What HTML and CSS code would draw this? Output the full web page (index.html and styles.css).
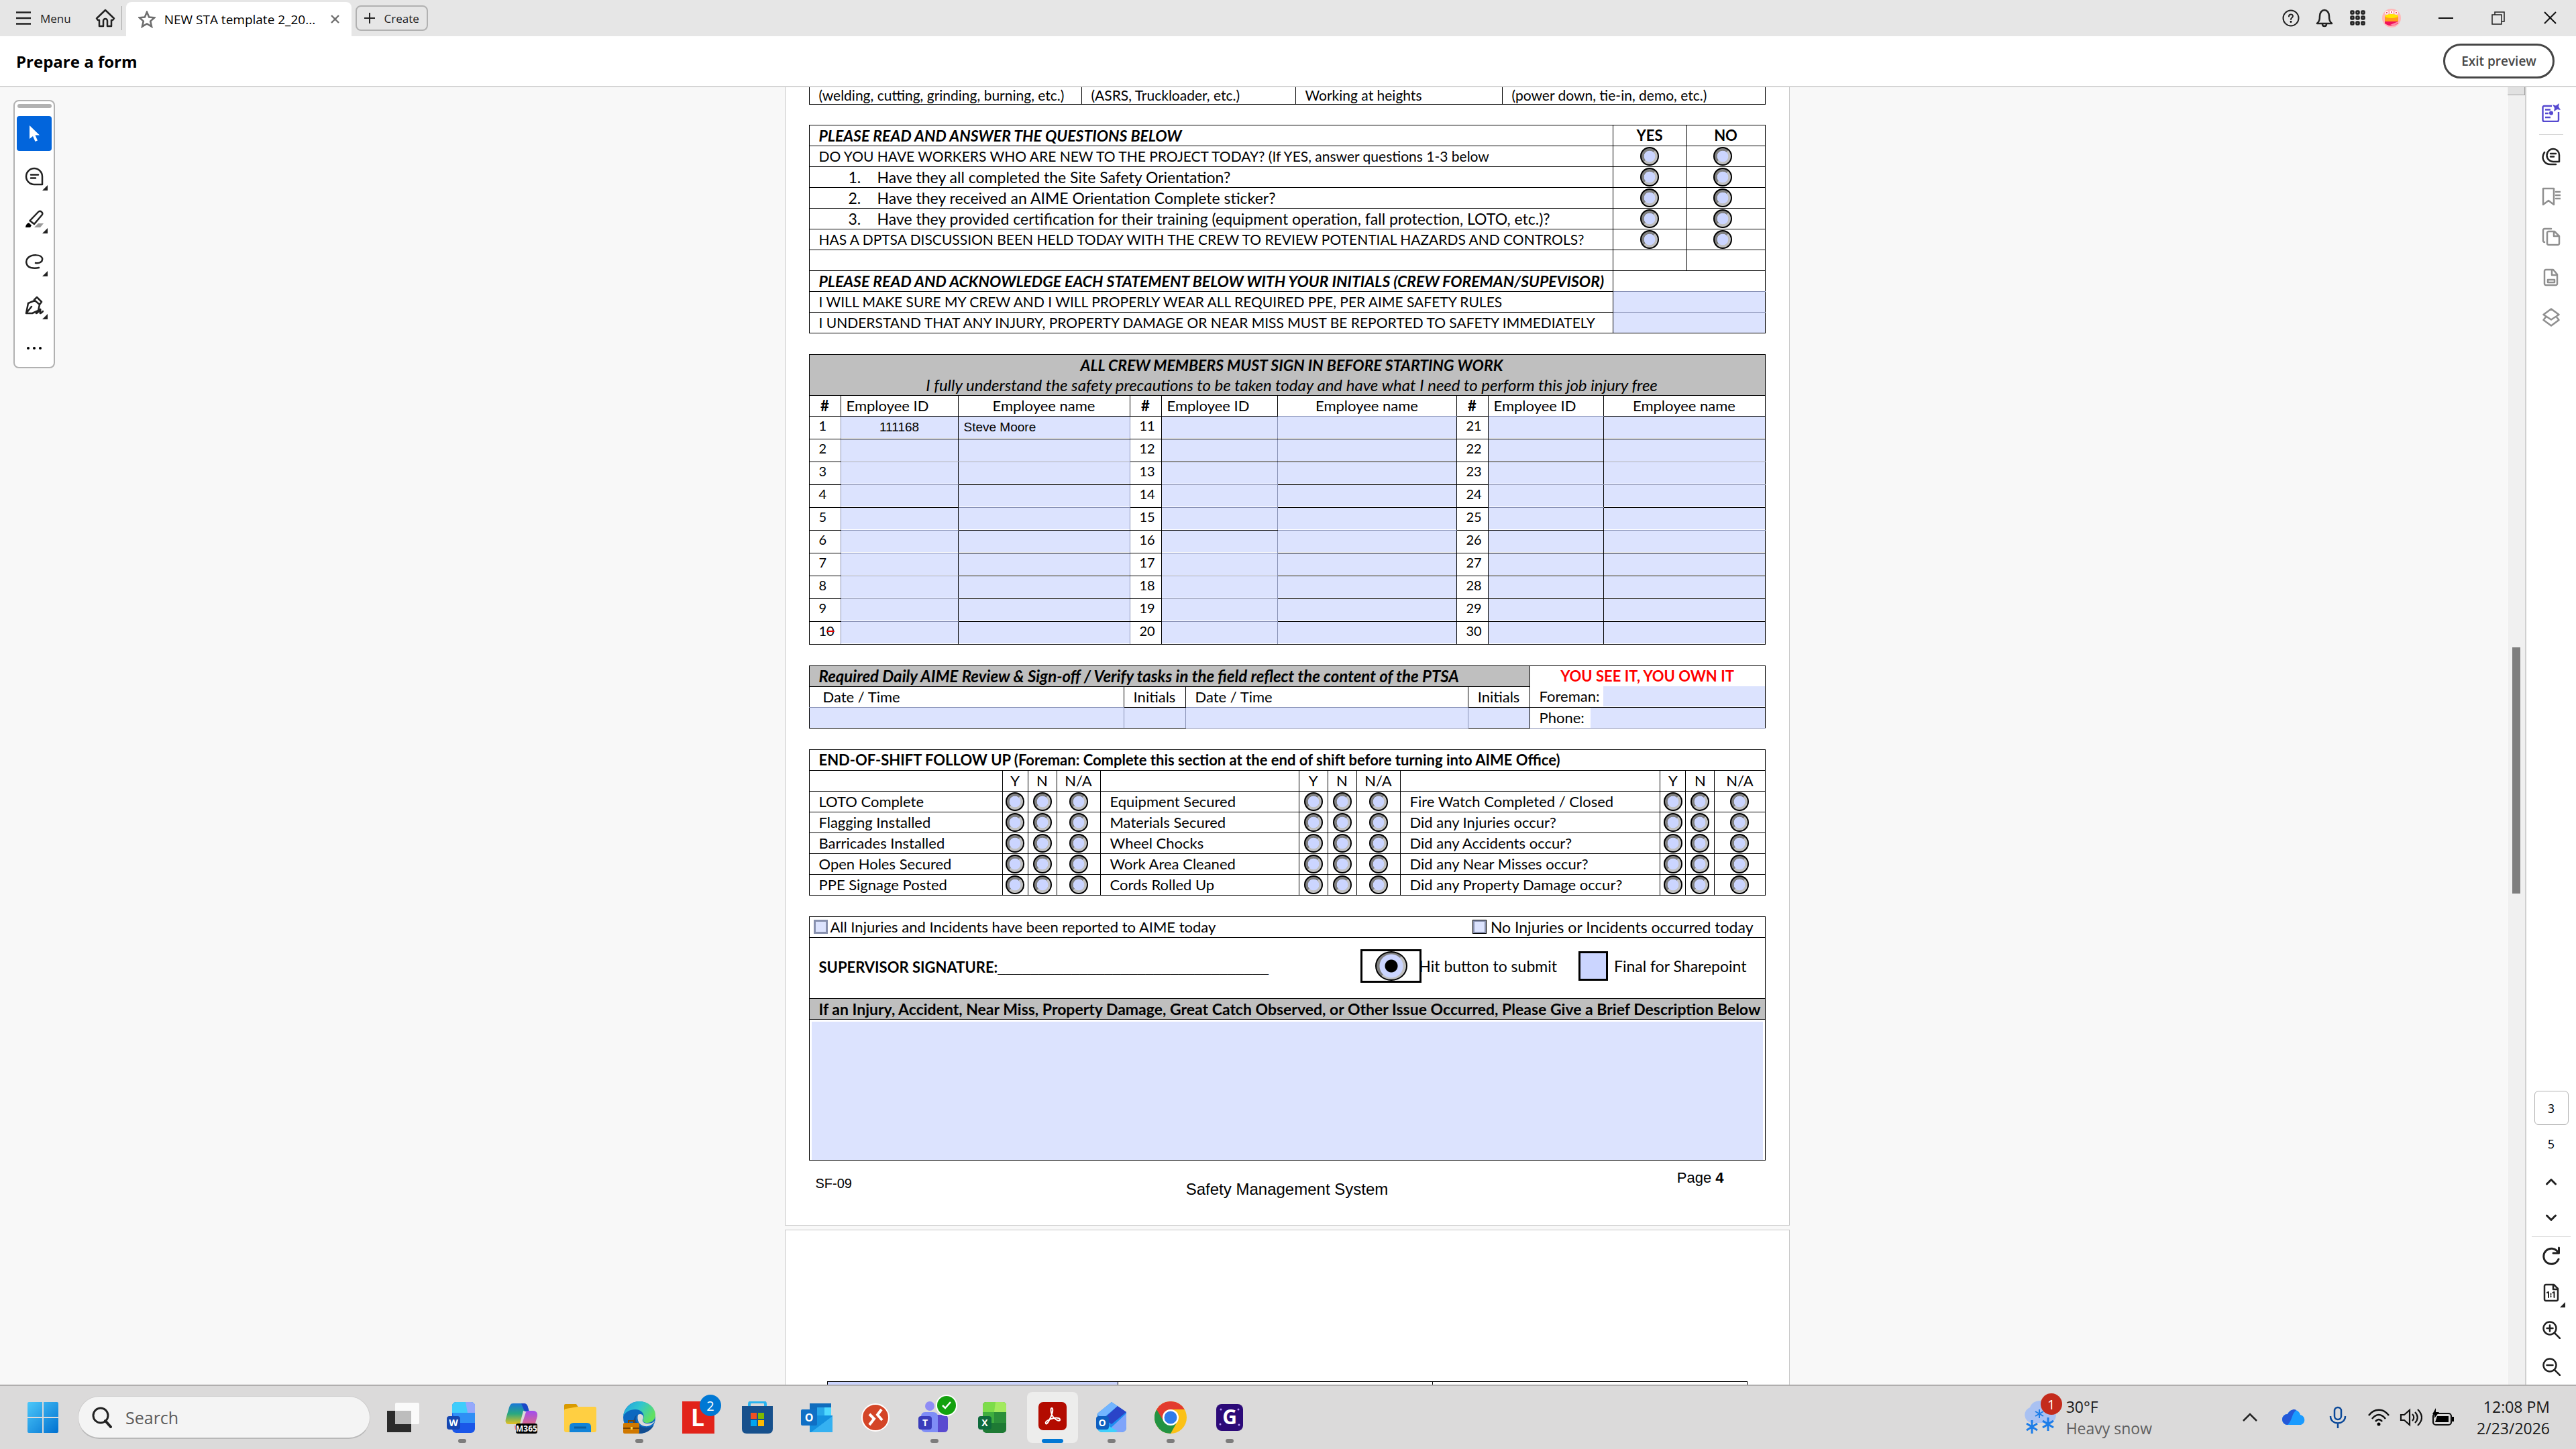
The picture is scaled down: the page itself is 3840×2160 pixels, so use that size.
FILE: index.html
```
<!doctype html>
<html lang="en-US">

<head>
  <meta charset="UTF-8" />
  <meta name="viewport" content="width=device-width, initial-scale=1.0">
  <title>NEW STA template</title>
  <link rel="stylesheet" href="styles.css">
</head>

<body>
  <header class="titlebar">
    <button class="menu-btn">
      <svg width="22" height="20" viewBox="0 0 22 20"><path d="M0 1.500h22M0 10h22M0 18.500h22" class="ln"/></svg>
      Menu
    </button>
    <button class="home-btn" aria-label="Home">
      <svg width="30" height="28" viewBox="0 0 30 28"><path d="M2 14.500 15 2l13 12.500-2 2.500h-2v9h-6v-8a3 3 0 0 0-6 0v8H6v-9H4z" class="ln"/></svg>
    </button>
    <div class="tab">
      <svg width="26" height="26" viewBox="0 0 26 26"><path d="M13 2l3.200 7.600 8 .7-6 5.300 1.800 8L13 19.400l-7 4.200 1.800-8-6-5.300 8-.7z" fill="none" stroke="#6e6e6e" stroke-width="2.600"/></svg>
      <span class="tab-name">NEW STA template 2_20...</span>
      <button class="tab-close" aria-label="Close tab">
        <svg width="13" height="13" viewBox="0 0 13 13"><path d="M1 1l11 11M12 1L1 12" stroke="#6e6e6e" stroke-width="2.400"/></svg>
      </button>
    </div>
    <button class="create-btn">
      <svg width="16" height="16" viewBox="0 0 16 16"><path d="M8 0v16M0 8h16" stroke="#222" stroke-width="2"/></svg>
      Create
    </button>
    <div class="title-icons">
      <button aria-label="Help"><svg width="28" height="28" viewBox="0 0 28 28"><circle cx="14" cy="14" r="11.500" class="ln thin"/><path d="M11 11.500c0-4 6-4 6-.500 0 2.200-3 2.200-3 5" class="ln thin"/><circle cx="14" cy="19.500" r="1.400"/></svg></button>
      <button aria-label="Notifications"><svg width="28" height="28" viewBox="0 0 28 28"><path d="M3 22c3-3 4-5 4-11 0-5 3-9 7-9s7 4 7 9c0 6 1 8 4 11zM11 23c0 4 6 4 6 0" class="ln"/></svg></button>
      <button aria-label="Apps"><svg width="28" height="28" viewBox="0 0 28 28"><g fill="#999" stroke="#222" stroke-width="2.600"><rect x="3.500" y="3.500" width="4" height="4" rx="1"/><rect x="11.500" y="3.500" width="4" height="4" rx="1"/><rect x="19.500" y="3.500" width="4" height="4" rx="1"/><rect x="3.500" y="11.500" width="4" height="4" rx="1"/><rect x="11.500" y="11.500" width="4" height="4" rx="1"/><rect x="19.500" y="11.500" width="4" height="4" rx="1"/><rect x="3.500" y="19.500" width="4" height="4" rx="1"/><rect x="11.500" y="19.500" width="4" height="4" rx="1"/><rect x="19.500" y="19.500" width="4" height="4" rx="1"/></g></svg></button>
      <button aria-label="Account"><svg width="28" height="28" viewBox="0 0 28 28"><circle cx="14" cy="14" r="14" fill="#ffb8b8"/><path d="M4 11h20v8H4z" fill="#ff9d1e"/><path d="M4 19h20v3q-10 7-20 0z" fill="#f0125c"/><ellipse cx="14" cy="11" rx="10" ry="3" fill="#ffe600"/><path d="M12 24l12-5v2l-7 5z" fill="#ff86a8"/><g fill="#e8264a" stroke="#fff" stroke-width="1.500"><circle cx="7" cy="6" r="1.800"/><circle cx="14" cy="5" r="1.800"/><circle cx="21" cy="6" r="1.800"/></g></svg></button>
    </div>
    <div class="window-icons">
      <button aria-label="Minimize"><svg width="22" height="22" viewBox="0 0 22 22"><path d="M0 11h22" stroke="#111" stroke-width="2"/></svg></button>
      <button aria-label="Restore"><svg width="22" height="22" viewBox="0 0 22 22"><path d="M2 6h14v14H2zM6 6V2h14v14h-4" fill="none" stroke="#222" stroke-width="1.500"/></svg></button>
      <button aria-label="Close"><svg width="22" height="22" viewBox="0 0 22 22"><path d="M2 2l17 17M19 2L2 19" stroke="#111" stroke-width="2"/></svg></button>
    </div>
  </header>

  <div class="toolbar">
    <h1>Prepare a form</h1>
    <button class="exit-btn">Exit preview</button>
  </div>

  <main class="main">
    <div class="rail">
      <div class="tools">
        <div class="tools-handle"></div>
        <button class="tool active" aria-label="Select"><svg width="28" height="28" viewBox="0 0 28 28"><path d="M7 2v20l5-4 3.500 8 3.500-1.500-3.500-8H22z" fill="#fff"/></svg></button>
        <button class="tool more" aria-label="Comment"><svg width="28" height="28" viewBox="0 0 28 28"><path d="M14 2a12 12 0 1 0 0 24h12V14A12 12 0 0 0 14 2zM9 11.500h11M9 16.500h7" class="ln"/></svg></button>
        <button class="tool more" aria-label="Highlight"><svg width="28" height="28" viewBox="0 0 28 28"><path d="M14 26l6-6h8l-5 6z" fill="#999"/><path d="M7.500 16L20 3c3-3 8 1 5.500 4.500L14 21z" class="ln"/><path d="M1 26c0-3 2-6 5-7l4 4-2 3z"/></svg></button>
        <button class="tool more" aria-label="Draw"><svg width="28" height="28" viewBox="0 0 28 28"><path d="M16 15c6 1 11-2 10-7C24 2 11 2 5 7c-5 5-3 13 4 15 4 1 8 1 12 0" class="ln"/></svg></button>
        <button class="tool more" aria-label="Sign"><svg width="28" height="28" viewBox="0 0 28 28"><path d="M2 26l3-15 10-4 7 6-2 9-9 4zM14 6l4-4 7 7-3 4M2 26l8-10M17 26c3 0 5-6 6-6s-1 6 0 6 2-1 4-3" class="ln"/></svg></button>
        <button class="tool" aria-label="More tools"><svg width="28" height="28" viewBox="0 0 28 28"><circle cx="5" cy="14" r="2"/><circle cx="14" cy="14" r="2"/><circle cx="23" cy="14" r="2"/></svg></button>
      </div>
    </div>

    <div class="viewer">
      <form class="page">
        <table class="grid tasks">
          <colgroup><col class="w406"><col class="w319"><col class="w308"><col></colgroup>
          <tr>
            <td>(welding, cutting, grinding, burning, etc.)</td>
            <td>(ASRS, Truckloader, etc.)</td>
            <td>Working at heights</td>
            <td>(power down, tie-in, demo, etc.)</td>
          </tr>
        </table>

        <table class="grid questions">
          <colgroup><col><col class="w110"><col class="w117"></colgroup>
          <tr><th class="lead">PLEASE READ AND ANSWER THE QUESTIONS BELOW</th><th>YES</th><th>NO</th></tr>
          <tr>
            <td class="caps">DO YOU HAVE WORKERS WHO ARE NEW TO THE PROJECT TODAY? (If YES, answer questions 1-3 below</td>
            <td class="mark"><input type="radio" name="q0" aria-label="New workers, yes"></td>
            <td class="mark"><input type="radio" name="q0" aria-label="New workers, no"></td>
          </tr>
          <tr>
            <td class="sub"><span class="num">1.</span>Have they all completed the Site Safety Orientation?</td>
            <td class="mark"><input type="radio" name="q1" aria-label="Orientation completed, yes"></td>
            <td class="mark"><input type="radio" name="q1" aria-label="Orientation completed, no"></td>
          </tr>
          <tr>
            <td class="sub"><span class="num">2.</span>Have they received an AIME Orientation Complete sticker?</td>
            <td class="mark"><input type="radio" name="q2" aria-label="Sticker received, yes"></td>
            <td class="mark"><input type="radio" name="q2" aria-label="Sticker received, no"></td>
          </tr>
          <tr>
            <td class="sub"><span class="num">3.</span>Have they provided certification for their training (equipment operation, fall protection, LOTO, etc.)?</td>
            <td class="mark"><input type="radio" name="q3" aria-label="Certification provided, yes"></td>
            <td class="mark"><input type="radio" name="q3" aria-label="Certification provided, no"></td>
          </tr>
          <tr>
            <td class="caps">HAS A DPTSA DISCUSSION BEEN HELD TODAY WITH THE CREW TO REVIEW POTENTIAL HAZARDS AND CONTROLS?</td>
            <td class="mark"><input type="radio" name="q4" aria-label="Discussion held, yes"></td>
            <td class="mark"><input type="radio" name="q4" aria-label="Discussion held, no"></td>
          </tr>
          <tr><td></td><td></td><td></td></tr>
          <tr><th class="lead">PLEASE READ AND ACKNOWLEDGE EACH STATEMENT BELOW WITH YOUR INITIALS (CREW FOREMAN/SUPEVISOR)</th><td colspan="2" class="s"></td></tr>
          <tr>
            <td class="caps"><label for="ack1">I WILL MAKE SURE MY CREW AND I WILL PROPERLY WEAR ALL REQUIRED PPE, PER AIME SAFETY RULES</label></td>
            <td colspan="2" class="field s"><input type="text" id="ack1"></td>
          </tr>
          <tr>
            <td class="caps"><label for="ack2">I UNDERSTAND THAT ANY INJURY, PROPERTY DAMAGE OR NEAR MISS MUST BE REPORTED TO SAFETY IMMEDIATELY</label></td>
            <td colspan="2" class="field"><input type="text" id="ack2"></td>
          </tr>
        </table>

        <table class="grid crew">
          <colgroup><col class="w47"><col class="w175"><col class="w256"><col class="w47"><col class="w173"><col class="w267"><col class="w47"><col class="w172"><col></colgroup>
          <tr class="crew-title"><td colspan="9" class="gray"><strong>ALL CREW MEMBERS MUST SIGN IN BEFORE STARTING WORK</strong><em>I fully understand the safety precautions to be taken today and have what I need to perform this job injury free</em></td></tr>
          <tr class="crew-head">
            <th>#</th><td class="id">Employee ID</td><td class="name">Employee name</td>
            <th>#</th><td class="id">Employee ID</td><td class="name s">Employee name</td>
            <th>#</th><td class="id s">Employee ID</td><td class="name">Employee name</td>
          </tr>
          <tr class="crew-row">
            <td>1</td><td class="field"><input type="text" class="center" value="111168" aria-label="Employee ID 1"></td><td class="field"><input type="text" value="Steve Moore" aria-label="Employee name 1"></td>
            <td>11</td><td class="field"><input type="text" aria-label="Employee ID 11"></td><td class="field"><input type="text" aria-label="Employee name 11"></td>
            <td>21</td><td class="field"><input type="text" aria-label="Employee ID 21"></td><td class="field"><input type="text" aria-label="Employee name 21"></td>
          </tr>
          <tr class="crew-row">
            <td>2</td><td class="field s"><input type="text" aria-label="Employee ID 2"></td><td class="field s"><input type="text" aria-label="Employee name 2"></td>
            <td>12</td><td class="field"><input type="text" aria-label="Employee ID 12"></td><td class="field"><input type="text" aria-label="Employee name 12"></td>
            <td>22</td><td class="field"><input type="text" aria-label="Employee ID 22"></td><td class="field s"><input type="text" aria-label="Employee name 22"></td>
          </tr>
          <tr class="crew-row">
            <td>3</td><td class="field s"><input type="text" aria-label="Employee ID 3"></td><td class="field"><input type="text" aria-label="Employee name 3"></td>
            <td>13</td><td class="field s"><input type="text" aria-label="Employee ID 13"></td><td class="field"><input type="text" aria-label="Employee name 13"></td>
            <td>23</td><td class="field s"><input type="text" aria-label="Employee ID 23"></td><td class="field s"><input type="text" aria-label="Employee name 23"></td>
          </tr>
          <tr class="crew-row">
            <td>4</td><td class="field"><input type="text" aria-label="Employee ID 4"></td><td class="field s"><input type="text" aria-label="Employee name 4"></td>
            <td>14</td><td class="field s"><input type="text" aria-label="Employee ID 14"></td><td class="field"><input type="text" aria-label="Employee name 14"></td>
            <td>24</td><td class="field s"><input type="text" aria-label="Employee ID 24"></td><td class="field"><input type="text" aria-label="Employee name 24"></td>
          </tr>
          <tr class="crew-row">
            <td>5</td><td class="field s"><input type="text" aria-label="Employee ID 5"></td><td class="field"><input type="text" aria-label="Employee name 5"></td>
            <td>15</td><td class="field"><input type="text" aria-label="Employee ID 15"></td><td class="field s"><input type="text" aria-label="Employee name 15"></td>
            <td>25</td><td class="field"><input type="text" aria-label="Employee ID 25"></td><td class="field s"><input type="text" aria-label="Employee name 25"></td>
          </tr>
          <tr class="crew-row">
            <td>6</td><td class="field s"><input type="text" aria-label="Employee ID 6"></td><td class="field"><input type="text" aria-label="Employee name 6"></td>
            <td>16</td><td class="field s"><input type="text" aria-label="Employee ID 16"></td><td class="field"><input type="text" aria-label="Employee name 16"></td>
            <td>26</td><td class="field"><input type="text" aria-label="Employee ID 26"></td><td class="field"><input type="text" aria-label="Employee name 26"></td>
          </tr>
          <tr class="crew-row">
            <td>7</td><td class="field s"><input type="text" aria-label="Employee ID 7"></td><td class="field"><input type="text" aria-label="Employee name 7"></td>
            <td>17</td><td class="field s"><input type="text" aria-label="Employee ID 17"></td><td class="field"><input type="text" aria-label="Employee name 17"></td>
            <td>27</td><td class="field"><input type="text" aria-label="Employee ID 27"></td><td class="field"><input type="text" aria-label="Employee name 27"></td>
          </tr>
          <tr class="crew-row">
            <td>8</td><td class="field s"><input type="text" aria-label="Employee ID 8"></td><td class="field"><input type="text" aria-label="Employee name 8"></td>
            <td>18</td><td class="field s"><input type="text" aria-label="Employee ID 18"></td><td class="field"><input type="text" aria-label="Employee name 18"></td>
            <td>28</td><td class="field"><input type="text" aria-label="Employee ID 28"></td><td class="field"><input type="text" aria-label="Employee name 28"></td>
          </tr>
          <tr class="crew-row">
            <td>9</td><td class="field s"><input type="text" aria-label="Employee ID 9"></td><td class="field"><input type="text" aria-label="Employee name 9"></td>
            <td>19</td><td class="field s"><input type="text" aria-label="Employee ID 19"></td><td class="field"><input type="text" aria-label="Employee name 19"></td>
            <td>29</td><td class="field"><input type="text" aria-label="Employee ID 29"></td><td class="field"><input type="text" aria-label="Employee name 29"></td>
          </tr>
          <tr class="crew-row">
            <td>1<span class="struck">0</span></td><td class="field"><input type="text" aria-label="Employee ID 10"></td><td class="field"><input type="text" aria-label="Employee name 10"></td>
            <td>20</td><td class="field"><input type="text" aria-label="Employee ID 20"></td><td class="field"><input type="text" aria-label="Employee name 20"></td>
            <td>30</td><td class="field"><input type="text" aria-label="Employee ID 30"></td><td class="field"><input type="text" aria-label="Employee name 30"></td>
          </tr>
        </table>

        <table class="grid review">
          <colgroup><col class="w469"><col class="w92"><col class="w421"><col class="w92"><col></colgroup>
          <tr><th colspan="4" class="lead gray">Required Daily AIME Review &amp; Sign-off / Verify tasks in the field reflect the content of the PTSA</th><th class="slogan">YOU SEE IT, YOU OWN IT</th></tr>
          <tr>
            <td class="s date">Date / Time</td><td class="mid">Initials</td><td class="s">Date / Time</td><td class="mid">Initials</td>
            <td class="field contact"><div class="contact-line"><label for="foreman">Foreman:</label><input type="text" id="foreman"></div></td>
          </tr>
          <tr>
            <td class="field r"><input type="text" aria-label="First date and time"></td>
            <td class="field r"><input type="text" aria-label="First initials"></td>
            <td class="field r s"><input type="text" aria-label="Second date and time"></td>
            <td class="field"><input type="text" aria-label="Second initials"></td>
            <td class="field s"><div class="contact-line phone"><label for="phone">Phone:</label><input type="text" id="phone"></div></td>
          </tr>
        </table>

        <table class="grid shift">
          <colgroup><col class="w288"><col class="w38"><col class="w43"><col class="w65"><col class="w296"><col class="w43"><col class="w43"><col class="w65"><col><col class="w38"><col class="w43"><col class="w75"></colgroup>
          <tr><th colspan="12" class="left">END-OF-SHIFT FOLLOW UP (Foreman: Complete this section at the end of shift before turning into AIME Office)</th></tr>
          <tr><td></td><td class="mid">Y</td><td class="mid">N</td><td class="mid">N/A</td><td></td><td class="mid">Y</td><td class="mid">N</td><td class="mid">N/A</td><td></td><td class="mid">Y</td><td class="mid">N</td><td class="mid">N/A</td></tr>
          <tr>
            <td>LOTO Complete</td>
            <td class="mark"><input type="radio" name="s1" aria-label="LOTO Complete, Y"></td><td class="mark"><input type="radio" name="s1" aria-label="LOTO Complete, N"></td><td class="mark"><input type="radio" name="s1" aria-label="LOTO Complete, N/A"></td>
            <td>Equipment Secured</td>
            <td class="mark"><input type="radio" name="s2" aria-label="Equipment Secured, Y"></td><td class="mark"><input type="radio" name="s2" aria-label="Equipment Secured, N"></td><td class="mark"><input type="radio" name="s2" aria-label="Equipment Secured, N/A"></td>
            <td>Fire Watch Completed / Closed</td>
            <td class="mark"><input type="radio" name="s3" aria-label="Fire Watch, Y"></td><td class="mark"><input type="radio" name="s3" aria-label="Fire Watch, N"></td><td class="mark"><input type="radio" name="s3" aria-label="Fire Watch, N/A"></td>
          </tr>
          <tr>
            <td>Flagging Installed</td>
            <td class="mark"><input type="radio" name="s4" aria-label="Flagging Installed, Y"></td><td class="mark"><input type="radio" name="s4" aria-label="Flagging Installed, N"></td><td class="mark"><input type="radio" name="s4" aria-label="Flagging Installed, N/A"></td>
            <td>Materials Secured</td>
            <td class="mark"><input type="radio" name="s5" aria-label="Materials Secured, Y"></td><td class="mark"><input type="radio" name="s5" aria-label="Materials Secured, N"></td><td class="mark"><input type="radio" name="s5" aria-label="Materials Secured, N/A"></td>
            <td>Did any Injuries occur?</td>
            <td class="mark"><input type="radio" name="s6" aria-label="Injuries, Y"></td><td class="mark"><input type="radio" name="s6" aria-label="Injuries, N"></td><td class="mark"><input type="radio" name="s6" aria-label="Injuries, N/A"></td>
          </tr>
          <tr>
            <td>Barricades Installed</td>
            <td class="mark"><input type="radio" name="s7" aria-label="Barricades Installed, Y"></td><td class="mark"><input type="radio" name="s7" aria-label="Barricades Installed, N"></td><td class="mark"><input type="radio" name="s7" aria-label="Barricades Installed, N/A"></td>
            <td>Wheel Chocks</td>
            <td class="mark"><input type="radio" name="s8" aria-label="Wheel Chocks, Y"></td><td class="mark"><input type="radio" name="s8" aria-label="Wheel Chocks, N"></td><td class="mark"><input type="radio" name="s8" aria-label="Wheel Chocks, N/A"></td>
            <td>Did any Accidents occur?</td>
            <td class="mark"><input type="radio" name="s9" aria-label="Accidents, Y"></td><td class="mark"><input type="radio" name="s9" aria-label="Accidents, N"></td><td class="mark"><input type="radio" name="s9" aria-label="Accidents, N/A"></td>
          </tr>
          <tr>
            <td>Open Holes Secured</td>
            <td class="mark"><input type="radio" name="s10" aria-label="Open Holes Secured, Y"></td><td class="mark"><input type="radio" name="s10" aria-label="Open Holes Secured, N"></td><td class="mark"><input type="radio" name="s10" aria-label="Open Holes Secured, N/A"></td>
            <td>Work Area Cleaned</td>
            <td class="mark"><input type="radio" name="s11" aria-label="Work Area Cleaned, Y"></td><td class="mark"><input type="radio" name="s11" aria-label="Work Area Cleaned, N"></td><td class="mark"><input type="radio" name="s11" aria-label="Work Area Cleaned, N/A"></td>
            <td>Did any Near Misses occur?</td>
            <td class="mark"><input type="radio" name="s12" aria-label="Near Misses, Y"></td><td class="mark"><input type="radio" name="s12" aria-label="Near Misses, N"></td><td class="mark"><input type="radio" name="s12" aria-label="Near Misses, N/A"></td>
          </tr>
          <tr>
            <td>PPE Signage Posted</td>
            <td class="mark"><input type="radio" name="s13" aria-label="PPE Signage Posted, Y"></td><td class="mark"><input type="radio" name="s13" aria-label="PPE Signage Posted, N"></td><td class="mark"><input type="radio" name="s13" aria-label="PPE Signage Posted, N/A"></td>
            <td>Cords Rolled Up</td>
            <td class="mark"><input type="radio" name="s14" aria-label="Cords Rolled Up, Y"></td><td class="mark"><input type="radio" name="s14" aria-label="Cords Rolled Up, N"></td><td class="mark"><input type="radio" name="s14" aria-label="Cords Rolled Up, N/A"></td>
            <td>Did any Property Damage occur?</td>
            <td class="mark"><input type="radio" name="s15" aria-label="Property Damage, Y"></td><td class="mark"><input type="radio" name="s15" aria-label="Property Damage, N"></td><td class="mark"><input type="radio" name="s15" aria-label="Property Damage, N/A"></td>
          </tr>
        </table>

        <section class="report">
          <div class="report-checks">
            <div class="check-line"><input type="checkbox" id="reported"><label for="reported">All Injuries and Incidents have been reported to AIME today</label></div>
            <div class="check-line none"><input type="checkbox" id="noinj"><label for="noinj">No Injuries or Incidents occurred today</label></div>
          </div>
          <div class="report-sign">
            <div class="signature"><strong>SUPERVISOR SIGNATURE:</strong><span class="sign-line">_________________________________</span></div>
            <div class="submit">
              <span class="submit-box"><input type="radio" id="submit" checked></span>
              <label for="submit">Hit button to submit</label>
            </div>
            <div class="final">
              <input type="checkbox" id="final">
              <label for="final">Final for Sharepoint</label>
            </div>
          </div>
          <label class="report-title" for="describe">If an Injury, Accident, Near Miss, Property Damage, Great Catch Observed, or Other Issue Occurred, Please Give a Brief Description Below</label>
          <textarea id="describe"></textarea>
        </section>

        <footer class="page-foot">
          <span class="foot-code">SF-09</span>
          <span class="foot-name">Safety Management System</span>
          <span class="foot-page">Page <b>4</b></span>
        </footer>
      </form>

      <div class="page next">
        <table class="grid">
          <colgroup><col class="w433"><col class="w469"><col></colgroup>
          <tr><td class="filled"></td><td></td><td></td></tr>
        </table>
      </div>
    </div>

    <div class="scroll">
      <div class="scroll-top"></div>
      <div class="scroll-thumb"></div>
    </div>

    <nav class="side">
      <button aria-label="Generative summary"><svg width="28" height="28" viewBox="0 0 28 28"><path d="M15 4H3.500a2 2 0 0 0-2 2v19a2 2 0 0 0 2 2H23a2 2 0 0 0 2-2V13M5 9.500h8M5 15h5M5 21h8" fill="none" stroke="#5548d0" stroke-width="2.400"/><path d="M16 2l5 1.500L26 0l-1 5 3 5-5-1-5 3 1-5z" fill="#5548d0"/><circle cx="14" cy="14.500" r="3" fill="#5548d0"/></svg></button>
      <hr>
      <button aria-label="Comments"><svg width="28" height="28" viewBox="0 0 28 28"><path d="M17 3a9.500 9.500 0 0 0 0 19h9V12a9 9 0 0 0-9-9zM13 10h8M13 14.500h5M4 8c-6 9 0 18 9 18h8" class="ln"/></svg></button>
      <button aria-label="Bookmarks"><svg width="28" height="28" viewBox="0 0 28 28"><path d="M2 2h16v24l-8-6-8 6zM21 7h7M21 12h7M21 17h7" class="ln dim"/></svg></button>
      <button aria-label="Pages"><svg width="28" height="28" viewBox="0 0 28 28"><path d="M4 22c-1 0-2-1-2-2V4c0-1 1-2 2-2h10M10 6h9l7 7v11c0 1-1 2-2 2H10c-1 0-2-1-2-2V8c0-1 1-2 2-2zM18 6v7h7" class="ln dim"/></svg></button>
      <button aria-label="Fields"><svg width="28" height="28" viewBox="0 0 28 28"><path d="M6 3h11l6 7v14c0 1-1 2-2 2H6c-1 0-2-1-2-2V5c0-1 1-2 2-2zM15 3v8h8M9 18h10v4H9z" class="ln dim"/></svg></button>
      <button aria-label="Layers"><svg width="28" height="28" viewBox="0 0 28 28"><path d="M14 1.500L25.500 10 14 17.500 2.500 10zM6 13.500L2.500 18 14 26.500 25.500 18 22 13.500" class="ln dim"/></svg></button>

      <input type="text" class="page-no" value="3" aria-label="Page number">
      <span class="page-total">5</span>
      <button class="low" aria-label="Previous page"><svg width="16" height="12" viewBox="0 0 16 12"><path d="M1.500 10L8 3.500l6.500 6.500" class="ln bold"/></svg></button>
      <button class="low" aria-label="Next page"><svg width="16" height="12" viewBox="0 0 16 12"><path d="M1.500 2L8 8.500 14.500 2" class="ln bold"/></svg></button>
      <hr class="low-rule">
      <button class="low" aria-label="Rotate"><svg width="28" height="28" viewBox="0 0 28 28"><path d="M25 19A11.500 11.500 0 1 1 24 8.500M25.500 2v8H17" class="ln bold"/></svg></button>
      <button class="low more" aria-label="Page display"><svg width="28" height="28" viewBox="0 0 28 28"><path d="M6 2h12l6 6v16c0 1-1 2-2 2H6c-1 0-2-1-2-2V4c0-1 1-2 2-2zM17 2v7h7" class="ln"/><path d="M8 14l2-1v8M16.500 14l2-1v8M13.500 15.500v1M13.500 19v1" class="ln thin"/></svg></button>
      <button class="low" aria-label="Zoom in"><svg width="28" height="28" viewBox="0 0 28 28"><circle cx="12" cy="12" r="9.500" class="ln"/><path d="M19 19l8 8M7.500 12h9M12 7.500v9" class="ln"/></svg></button>
      <button class="low" aria-label="Zoom out"><svg width="28" height="28" viewBox="0 0 28 28"><circle cx="12" cy="12" r="9.500" class="ln"/><path d="M19 19l8 8M7.500 12h9" class="ln"/></svg></button>
    </nav>
  </main>

  <footer class="taskbar">
    <button class="task" aria-label="Start"><svg width="48" height="48" viewBox="0 0 48 48"><defs><linearGradient id="win" x1="0" y1="0" x2="1" y2="1"><stop offset="0" stop-color="#4cc8fa"/><stop offset="1" stop-color="#0070d0"/></linearGradient></defs><path d="M3 1h20v22H1V3q0-2 2-2zM25 1h20q2 0 2 2v20H25zM1 25h22v22H3q-2 0-2-2zM25 25h22v20q0 2-2 2H25z" fill="url(#win)"/></svg></button>
    <div class="search">
      <svg width="30" height="32" viewBox="0 0 30 32"><circle cx="13" cy="13" r="11" fill="none" stroke="#222" stroke-width="3"/><path d="M20 21l8 9" stroke="#222" stroke-width="4" stroke-linecap="round"/></svg>
      <input type="text" placeholder="Search" aria-label="Search">
    </div>
    <button class="task" aria-label="Task view"><svg width="48" height="48" viewBox="0 0 48 48"><path d="M0 14h36v32H0z" fill="#2b2b2b"/><rect x="12" y="2" width="36" height="32" rx="2" fill="#fafafa"/><path d="M12 14h24v20H12z" fill="#bdbdbd"/></svg></button>
    <button class="task open" aria-label="Word"><svg width="48" height="48" viewBox="0 0 48 48"><rect x="9" y="1" width="34" height="46" rx="6" fill="#1a56e8"/><path d="M9 16h34v16H14z" fill="#2f8ff5"/><path d="M15 1h22q6 0 6 6v10H9V7q0-6 6-6z" fill="#3fcdfb"/><path d="M29 1h8q6 0 6 6v10H32z" fill="#97a8fb"/><rect x="1" y="22" width="20" height="20" rx="4" fill="#1646b0"/><text x="11" y="37" class="ico-text t14">W</text></svg></button>
    <button class="task" aria-label="Microsoft 365"><svg width="48" height="48" viewBox="0 0 48 48"><defs><linearGradient id="cp" x1="0" y1="0" x2="0" y2="1"><stop offset="0" stop-color="#1a78d8"/><stop offset=".5" stop-color="#28a880"/><stop offset="1" stop-color="#e8c020"/></linearGradient><linearGradient id="cq" x1="0" y1="0" x2="0" y2="1"><stop offset="0" stop-color="#a04cf0"/><stop offset="1" stop-color="#f87858"/></linearGradient></defs><path d="M12 3h16q5 0 6 6l1 5h-8l-5 20H6q-7 0-5-8L6 9q2-6 6-6z" fill="url(#cp)"/><path d="M24 3h5q4 1 5 6l2 6h-7z" fill="#1a48c8"/><path d="M35 14h6q8 0 7 8l-4 14q-2 9-8 9H17q-3-4-3-9h7q4 0 6-8l3-9q1-5 5-5z" fill="url(#cq)"/><rect x="16" y="33" width="32" height="15" rx="3"/><text x="32" y="45" class="ico-text t12">M365</text></svg></button>
    <button class="task" aria-label="File Explorer"><svg width="48" height="48" viewBox="0 0 48 48"><path d="M2 4h16l4 6v10H0V6q0-2 2-2z" fill="#d99a00"/><path d="M0 14q0-3 3-3l17-3h26q2 0 2 3v32q0 3-3 3H3q-3 0-3-3z" fill="#ffcf42"/><path d="M8 46V38q0-6 6-6h20q6 0 6 6v8z" fill="#1183d8"/><path d="M15 39h18" stroke="#0b5ea0" stroke-width="3"/></svg></button>
    <button class="task open" aria-label="Edge"><svg width="48" height="48" viewBox="0 0 48 48"><defs><linearGradient id="ed" x1="0" y1="0" x2="1" y2=".5"><stop offset="0" stop-color="#1f9fe0"/><stop offset=".5" stop-color="#30c5d0"/><stop offset="1" stop-color="#62e060"/></linearGradient></defs><circle cx="24" cy="24" r="24" fill="#0c68c0"/><path d="M0 22C2 9 12 0 24 0c14 0 24 10 24 20 0 8-6 12-12 12-5 0-8-2-6-6 3-8-4-14-12-14C10 12 3 16 0 22z" fill="url(#ed)"/><path d="M21 19c-6 8 0 20 13 20 5 0 9-1 12-4-4 8-12 13-22 13C12 46 12 26 21 19z" fill="#124d90"/><path d="M22 20c6-3 10 2 7 7-1 4 3 6 8 6 4 0 7-1 10-4-2 5-8 9-15 8-8-1-12-9-10-17z" fill="#dbdada"/><rect x="0" y="32" width="24" height="16" rx="2" fill="#d07800"/><path d="M0 40h24M8 32v-3h8v3" fill="none" stroke="#7a4200" stroke-width="2"/><path d="M11 38h3v4h-3z" fill="#ffd84a"/></svg></button>
    <button class="task" aria-label="Lenovo"><svg width="48" height="48" viewBox="0 0 48 48"><rect width="48" height="48" fill="#e2231a"/><text x="23" y="37" class="ico-text t36">L</text></svg><span class="badge blue">2</span></button>
    <button class="task" aria-label="Store"><svg width="48" height="48" viewBox="0 0 48 48"><path d="M12 10V4q0-3 3-3h18q3 0 3 3v6" fill="none" stroke="#28b4f0" stroke-width="4"/><path d="M1 7h46v34q0 7-7 7H8q-7 0-7-7z" fill="#17508c"/><path d="M14 17h9v9h-9z" fill="#f25022"/><path d="M25 17h9v9h-9z" fill="#7fba00"/><path d="M14 28h9v9h-9z" fill="#00a4ef"/><path d="M25 28h9v9h-9z" fill="#ffb900"/></svg></button>
    <button class="task" aria-label="Outlook classic"><svg width="48" height="48" viewBox="0 0 48 48"><path d="M14 3h32v30H14z" fill="#0f6cbd"/><path d="M25 9h11v12H25z" fill="#28a8ea"/><path d="M36 9h10v12H36z" fill="#50d9ff"/><path d="M14 21h34v22q0 3-3 3H14z" fill="#1490df"/><path d="M48 22v24L16 46z" fill="#35b1f1"/><rect x="1" y="12" width="24" height="24" rx="2" fill="#0f6fc5"/><text x="13" y="30" class="ico-text t16">O</text></svg></button>
    <button class="task" aria-label="Remote Desktop"><svg width="48" height="48" viewBox="0 0 48 48"><circle cx="24" cy="24" r="20" fill="#d44527" stroke="#fff" stroke-width="2"/><path d="M15 19l7 7-7 9M33 12l-6 8 7 8" fill="none" stroke="#fff" stroke-width="4"/></svg></button>
    <button class="task open" aria-label="Teams"><svg width="48" height="48" viewBox="0 0 48 48"><circle cx="17" cy="7" r="7" fill="#8f8cf5"/><path d="M28 20h10q6 0 6 6v14q0 6-6 6H26z" fill="#5a4ad0"/><path d="M10 16h12q7 0 7 7v23H11q-7 0-7-7V23q0-7 6-7z" fill="#7f8df6"/><rect x="0" y="22" width="20" height="20" rx="4" fill="#3a3dbb"/><text x="10" y="37" class="ico-text t14">T</text></svg><span class="badge green"><svg width="16" height="14" viewBox="0 0 16 14"><path d="M2 7l4 4 8-9" fill="none" stroke="#fff" stroke-width="2.500"/></svg></span></button>
    <button class="task" aria-label="Excel"><svg width="48" height="48" viewBox="0 0 48 48"><rect x="8" y="1" width="35" height="46" rx="5" fill="#1e7a34"/><path d="M8 16h17v16H8z" fill="#3fae3f"/><path d="M25 16h18v16H25z" fill="#2b8f3a"/><path d="M13 1h14v15H8V6q0-5 5-5z" fill="#7ddc4a"/><path d="M27 1h11q5 0 5 5v10H25z" fill="#a3ea5e"/><rect x="1" y="22" width="20" height="20" rx="4" fill="#0e6b3c"/><text x="11" y="37" class="ico-text t14">X</text></svg></button>
    <button class="task current" aria-label="Acrobat"><svg width="48" height="48" viewBox="0 0 48 48"><rect x="3" y="1" width="42" height="42" rx="7" fill="#b30b00"/><path d="M14 33c-2-3 6-7 12-8 5-1 10 0 9 3-2 3-10-3-12-8-2-6-2-10 0-10 3 1 0 11-3 16-2 5-5 9-6 7z" fill="none" stroke="#fff" stroke-width="2"/></svg></button>
    <button class="task open" aria-label="Outlook"><svg width="48" height="48" viewBox="0 0 48 48"><path d="M3 18L24 1l22 15v22q0 8-8 8H11q-8 0-8-8z" fill="#1f8ef0"/><path d="M3 18L24 1l9 6L8 28z" fill="#73b5ff"/><path d="M33 7l13 9-22 18-12-8z" fill="#2a44c8"/><path d="M46 18v20q0 8-8 8H16z" fill="#7fa4fa"/><path d="M3 28l30 16-4 2H11q-8 0-8-8z" fill="#3fd0fc"/><rect x="1" y="22" width="19" height="20" rx="4" fill="#0f5fc0"/><text x="10" y="37" class="ico-text t14">O</text></svg></button>
    <button class="task open" aria-label="Chrome"><svg width="48" height="48" viewBox="0 0 48 48"><circle cx="24" cy="24" r="24" fill="#fbc116"/><path d="M3.200 12A24 24 0 0 0 24 48l10-18-20-4z" fill="#229342"/><path d="M3.200 12A24 24 0 0 1 44.800 12H24a12 12 0 0 0-10.400 18z" fill="#e33b2e"/><circle cx="24" cy="24" r="12" fill="#fff"/><circle cx="24" cy="24" r="9.500" fill="#2f7be8"/></svg></button>
    <button class="task open" aria-label="G app"><svg width="48" height="48" viewBox="0 0 48 48"><rect x="4" y="4" width="40" height="40" rx="8" fill="#2c0a78"/><text x="24" y="34" class="ico-text t30">G</text><g fill="#b79af5"><circle cx="11" cy="12" r="1.500"/><circle cx="37" cy="12" r="1.500"/><circle cx="10" cy="34" r="1.500"/><circle cx="38" cy="35" r="1.500"/></g></svg></button>

    <button class="weather">
      <span class="weather-icon">
        <svg width="50" height="52" viewBox="0 0 50 52"><path d="M12 34a12 12 0 0 1-2-23C14-2 36-3 40 12c14 4 10 22-2 22z" fill="#a9c1f2"/><g stroke="#1d7de8" stroke-width="3"><path d="M13 30v20M5 35l16 10M21 35L5 45M37 26v20M29 31l16 10M45 31L29 41"/><path d="M24 14v13M18 17l12 7M30 17l-12 7" stroke-width="2"/></g></svg>
        <span class="badge red">1</span>
      </span>
      <span class="weather-text"><span>30°F</span><span class="muted">Heavy snow</span></span>
    </button>
    <div class="tray">
      <button class="tray-up" aria-label="Hidden icons"><svg width="24" height="16" viewBox="0 0 24 16"><path d="M2 13L12 3l10 10" fill="none" stroke="#222" stroke-width="2.500"/></svg></button>
      <button class="tray-cloud" aria-label="OneDrive"><svg width="34" height="24" viewBox="0 0 34 24"><path d="M8 23a8 8 0 0 1 0-16C12-2 25-1 27 8c9 2 8 15-1 15z" fill="#1a9bff"/><path d="M8 23a8 8 0 0 1 0-16C12 0 18-1 21 1 14 6 15 17 8 23z" fill="#2458d8"/></svg></button>
      <button class="tray-mic" aria-label="Microphone"><svg width="26" height="34" viewBox="0 0 26 34"><rect x="8" y="2" width="10" height="18" rx="5" fill="none" stroke="#0a4898" stroke-width="2.500"/><path d="M2 15c0 14 22 14 22 0M13 26v7" fill="none" stroke="#0a4898" stroke-width="2.500"/></svg></button>
      <button class="tray-status" aria-label="Network, sound and battery">
        <svg width="34" height="28" viewBox="0 0 34 28"><path d="M2 11c8-11 22-11 30 0M7 16c6-8 14-8 20 0M12 20c3-4 7-4 10 0" fill="none" stroke="#111" stroke-width="2.500"/><circle cx="17" cy="24" r="2.500"/></svg>
        <svg width="34" height="28" viewBox="0 0 34 28"><path d="M2 10h5l8-7v22l-8-7H2zM19 9c3 3 3 7 0 10M23 6c5 5 5 11 0 16M27 2c8 8 8 16 0 24" fill="none" stroke="#111" stroke-width="2.200"/></svg>
        <svg width="34" height="28" viewBox="0 0 34 28"><rect x="2" y="8" width="27" height="17" rx="4" fill="none" stroke="#111" stroke-width="2.200"/><path d="M8 12h17v9H5z"/><path d="M30 13h3v7h-3zM6 0v6h5L4 15V9H1z"/></svg>
      </button>
      <button class="clock"><span>12:08 PM</span><span>2/23/2026</span></button>
    </div>
  </footer>
</body>

</html>
```

FILE: styles.css
```
* {
  box-sizing: border-box;
}

body {
  margin: 0;
  height: 100vh;
  display: flex;
  flex-direction: column;
  overflow: hidden;
  font-family: "Open Sans", sans-serif;
  font-size: 17px;
  color: #222;
  background-color: #f8f8f8;
}

button {
  border: 0;
  padding: 0;
  margin: 0;
  background: none;
  font: inherit;
  color: inherit;
  display: flex;
  align-items: center;
  justify-content: center;
  cursor: pointer;
}

svg {
  display: block;
  flex: none;
}

.ln {
  fill: none;
  stroke: #222;
  stroke-width: 2.5;
  stroke-linecap: round;
  stroke-linejoin: round;
}

.ln.thin {
  stroke-width: 2;
}

.ln.bold {
  stroke-width: 3;
}

.ln.dim {
  stroke: #8f8f8f;
}

/* title bar */

.titlebar {
  display: flex;
  align-items: center;
  height: 54px;
  flex: none;
  background-color: #e6e6e6;
  padding-left: 24px;
}

.menu-btn {
  gap: 14px;
}

.home-btn {
  margin-left: 36px;
  padding-right: 9px;
  height: 36px;
  border-right: 1px solid #a8a8a8;
}

.tab {
  display: flex;
  align-items: center;
  align-self: flex-end;
  width: 336px;
  height: 51px;
  margin-left: 6px;
  padding: 0 18px;
  background-color: #fff;
  border-radius: 8px 8px 0 0;
}

.tab-name {
  margin-left: 13px;
  font-size: 19px;
  color: #000;
}

.tab-close {
  margin-left: auto;
}

.create-btn {
  width: 108px;
  height: 38px;
  margin-left: 6px;
  gap: 14px;
  border: 2px solid #b1b1b1;
  border-radius: 8px;
}

.title-icons {
  display: flex;
  gap: 22px;
  margin-left: auto;
}

.window-icons {
  display: flex;
  gap: 56px;
  margin-left: 56px;
  margin-right: 27px;
}

.toolbar {
  display: flex;
  align-items: center;
  justify-content: space-between;
  height: 76px;
  flex: none;
  padding: 0 32px 0 24px;
  background-color: #fff;
  border-bottom: 2px solid #d5d5d5;
}

.toolbar h1 {
  margin: 0;
  font-size: 24px;
  font-weight: 700;
  color: #000;
}

.exit-btn {
  width: 166px;
  height: 52px;
  border: 3px solid #464646;
  border-radius: 26px;
  font-size: 19px;
  font-weight: 600;
  color: #464646;
}

/* main area */

.main {
  display: flex;
  flex: 1;
  min-height: 0;
}

.rail {
  width: 100px;
  flex: none;
  padding: 19px 18px 0 20px;
}

.tools {
  display: flex;
  flex-direction: column;
  align-items: center;
  gap: 12px;
  padding: 4px 0 2px;
  background-color: #fff;
  border: 2px solid #b1b1b1;
  border-radius: 8px;
}

.tools-handle {
  width: 51px;
  height: 6px;
  border-radius: 3px;
  background-color: #b1b1b1;
}

.tool {
  width: 52px;
  height: 52px;
  flex: none;
  border-radius: 4px;
}

.tool.active {
  background-color: #0265dc;
}

.more {
  position: relative;
}

.more::after {
  content: "";
  position: absolute;
  right: 6px;
  bottom: 5px;
  border-left: 8px solid transparent;
  border-bottom: 8px solid #222;
}

.viewer {
  flex: 1;
  min-width: 0;
  overflow: hidden;
  display: flex;
  flex-direction: column;
  align-items: center;
}

.page {
  flex: none;
  width: 100%;
  max-width: 1498px;
  padding: 0 35px 41px;
  background-color: #fff;
  border: 1px solid #c8c8c8;
  border-top: 0;
  font-family: Lato, sans-serif;
  font-size: 22px;
  line-height: 30px;
  color: #000;
}

.page.next {
  margin-top: 6px;
  padding: 225px 62px 0;
  border-top: 1px solid #c8c8c8;
  min-height: 400px;
}

/* form tables */

.grid {
  width: 100%;
  table-layout: fixed;
  border-collapse: collapse;
}

.grid tr {
  height: 31px;
}

.grid td,
.grid th {
  padding: 0 0 0 14px;
  border: 1px solid #000;
  text-align: left;
  white-space: nowrap;
}

.grid th,
.grid .mid {
  padding: 0;
  text-align: center;
}

.grid th.lead {
  padding-left: 14px;
  text-align: left;
  font-size: 23px;
  font-style: italic;
}

.grid th.left {
  padding-left: 14px;
  text-align: left;
}

.grid .caps {
  font-size: 21px;
}

.grid .field,
.grid .mark {
  padding: 0;
}

.grid .gray {
  background-color: #bfbfbf;
}

.grid .s {
  border-bottom-color: #8790b4;
}

.grid .r {
  border-right-color: #8790b4;
}

.grid .filled {
  background-color: #cbd5ff;
}

.w38 { width: 38px; }
.w43 { width: 43px; }
.w47 { width: 47px; }
.w65 { width: 65px; }
.w75 { width: 75px; }
.w92 { width: 92px; }
.w110 { width: 110px; }
.w117 { width: 117px; }
.w172 { width: 172px; }
.w173 { width: 173px; }
.w175 { width: 175px; }
.w256 { width: 256px; }
.w267 { width: 267px; }
.w288 { width: 288px; }
.w296 { width: 296px; }
.w308 { width: 308px; }
.w319 { width: 319px; }
.w406 { width: 406px; }
.w421 { width: 421px; }
.w433 { width: 433px; }
.w469 { width: 469px; }

.page input[type="text"] {
  display: block;
  width: 100%;
  height: 30px;
  margin: 0;
  padding: 0 8px;
  border: 0;
  background-color: #dce3fe;
  font-family: "Liberation Sans", Arial, sans-serif;
  font-size: 19px;
}

.page input.center {
  text-align: center;
}

.page input[type="radio"] {
  appearance: none;
  display: block;
  width: 28px;
  height: 28px;
  margin: 0 auto;
  border: 2px solid #000;
  border-radius: 50%;
  background: radial-gradient(closest-side, #cbd5ff 66%, transparent 72%), linear-gradient(135deg, #808080 50%, #c0c0c0 50%);
}

.tasks tr {
  height: 25px;
}

.grid.tasks td {
  border-top: 0;
  font-size: 21px;
  line-height: 24px;
}

.questions {
  margin-top: 30px;
}

.questions .sub {
  padding-left: 58px;
  font-size: 23px;
}

.questions .mark:last-child {
  padding-right: 10px;
}

.num {
  display: inline-block;
  width: 43px;
}

.crew {
  margin-top: 31px;
}

.crew strong,
.crew em {
  display: block;
  text-align: center;
}

.crew strong {
  font-size: 23px;
  font-style: italic;
}

.crew em {
  font-size: 24px;
}

.crew .crew-head .id {
  padding-left: 8px;
}

.crew .crew-head .name {
  padding-left: 0;
  text-align: center;
}

.crew .crew-row {
  height: 34px;
}

.crew .crew-row td {
  vertical-align: top;
  font-size: 20px;
  line-height: 26px;
}

.crew .crew-row td:nth-child(1),
.crew .crew-row td:nth-child(3),
.crew .crew-row td:nth-child(5) {
  border-right-color: #8790b4;
}

.crew .crew-row input {
  height: 32px;
}

.struck {
  text-decoration: line-through #e00;
}

.review {
  margin-top: 31px;
}

.grid.review th.lead {
  font-size: 24px;
}

.review .date {
  padding-left: 20px;
}

.review .slogan {
  color: #f00;
  border-bottom: 0;
}

.review .contact {
  border-top: 0;
}

.contact-line {
  display: flex;
  align-items: center;
  padding-left: 14px;
}

.contact-line label {
  width: 95px;
  flex: none;
}

.contact-line.phone label {
  width: 76px;
}

.page .contact-line input {
  width: auto;
  min-width: 0;
  flex: 1;
}

.shift {
  margin-top: 31px;
}

/* report block */

.report {
  margin-top: 31px;
  border: 1px solid #000;
}

.report-checks {
  display: flex;
  justify-content: space-between;
  padding: 0 17px 0 6px;
  border-bottom: 1px solid #000;
}

.check-line {
  display: flex;
  align-items: center;
  gap: 4px;
}

.check-line input {
  appearance: none;
  width: 21px;
  height: 21px;
  margin: 0;
  border: 3px solid #8790ae;
  background-color: #dce3fe;
}

.check-line.none {
  gap: 6px;
  font-size: 23px;
}

.check-line.none input {
  outline: 1px solid #000;
  outline-offset: -1px;
}

.report-sign {
  display: flex;
  align-items: center;
  height: 90px;
  padding: 0 27px 0 14px;
}

.signature {
  font-size: 22px;
}

.sign-line {
  font-family: "Liberation Sans", Arial, sans-serif;
  font-weight: 700;
}

.submit,
.final {
  display: flex;
  align-items: center;
  margin-bottom: 6px;
  font-size: 23px;
}

.submit {
  margin-left: auto;
}

.submit-box {
  width: 91px;
  height: 50px;
  margin-right: -4px;
  border: 3px solid #000;
}

.page .submit-box input {
  width: 48px;
  height: 44px;
  background: radial-gradient(circle, #000 9px, #cbd5ff 10px, #cbd5ff 17px, transparent 18px), linear-gradient(135deg, #808080 50%, #c0c0c0 50%);
}

.final {
  gap: 9px;
  margin-left: 32px;
}

.final input {
  appearance: none;
  width: 44px;
  height: 44px;
  margin: 0;
  border: 3px solid #000;
  background-color: #cbd5ff;
}

.report-title {
  display: block;
  padding-left: 14px;
  border-top: 1px solid #000;
  border-bottom: 1px solid #000;
  background-color: #bfbfbf;
  font-size: 23px;
  font-weight: 700;
  white-space: nowrap;
}

.report textarea {
  display: block;
  width: calc(100% - 6px);
  height: 206px;
  margin: 3px 3px 0;
  border: 0;
  background-color: #dce3fe;
  resize: none;
}

.page-foot {
  display: grid;
  grid-template-columns: 1fr auto 1fr;
  height: 41px;
  margin-top: 14px;
  font-family: "Liberation Sans", Arial, sans-serif;
  line-height: 24px;
}

.foot-code {
  align-self: center;
  padding-left: 10px;
  font-size: 20px;
}

.foot-name {
  align-self: end;
  font-size: 24px;
}

.foot-page {
  justify-self: end;
  padding-right: 62px;
}

/* scrollbar and side panel */

.scroll {
  display: flex;
  flex-direction: column;
  align-items: center;
  width: 29px;
  flex: none;
  background-color: #f0f0f0;
  border-left: 1px solid #fff;
  border-right: 2px solid #d0d0d0;
}

.scroll-top {
  width: 100%;
  height: 12px;
  flex: none;
  background-color: #e1e1e1;
  border-right: 1px solid #a0a0a0;
  border-bottom: 1px solid #a0a0a0;
}

.scroll-thumb {
  width: 12px;
  height: 19%;
  margin-top: 823px;
  background-color: #7e7e7e;
}

.side {
  display: flex;
  flex-direction: column;
  align-items: center;
  width: 74px;
  flex: none;
  padding-top: 8px;
  background-color: #fff;
}

.side button {
  width: 54px;
  height: 60px;
  flex: none;
}

.side button.low {
  height: 55px;
}

.side hr {
  width: 36px;
  margin: 2px 0;
  border: 0;
  border-top: 1px solid #d8d8d8;
}

.side .low-rule {
  width: 58px;
  margin: 0;
}

.page-no {
  width: 51px;
  height: 51px;
  margin-top: auto;
  border: 1px solid #b1b1b1;
  border-radius: 6px;
  background-color: #fff;
  font-family: inherit;
  font-size: 18px;
  text-align: center;
}

.page-total {
  font-size: 18px;
  line-height: 56px;
  color: #000;
}

/* taskbar */

.taskbar {
  display: flex;
  align-items: center;
  height: 96px;
  flex: none;
  padding: 0 20px;
  background-color: #dbdada;
  border-top: 2px solid #b0aeae;
}

.task {
  position: relative;
  width: 88px;
  height: 76px;
  flex: none;
}

.task.open::after,
.task.current::after {
  content: "";
  position: absolute;
  left: 38px;
  bottom: 0;
  width: 12px;
  height: 6px;
  border-radius: 3px;
  background-color: #7c7c7c;
}

.task.current {
  width: 76px;
  margin: 0 6px;
  border-radius: 8px;
  background-color: #ededec;
}

.task.current::after {
  left: 22px;
  width: 32px;
  background-color: #0078d4;
}

.ico-text {
  fill: #fff;
  font-family: "Open Sans", sans-serif;
  font-weight: 700;
  text-anchor: middle;
}

.t12 { font-size: 12px; }
.t14 { font-size: 14px; }
.t16 { font-size: 16px; }
.t30 { font-size: 30px; }
.t36 { font-size: 36px; }

.search {
  display: flex;
  align-items: center;
  width: 436px;
  height: 64px;
  margin: 0 5px 0 8px;
  padding-left: 20px;
  gap: 20px;
  border: 1px solid #cdcccc;
  border-bottom: 2px solid #b8b8b8;
  border-radius: 32px;
  background-color: #f4f4f4;
}

.search input {
  flex: 1;
  min-width: 0;
  border: 0;
  background: none;
  font-family: inherit;
  font-size: 25px;
  padding: 0;
}

.search input::placeholder {
  color: #5c5c5c;
}

.badge {
  position: absolute;
  top: 4px;
  right: 10px;
  display: flex;
  align-items: center;
  justify-content: center;
  width: 32px;
  height: 32px;
  border-radius: 50%;
  font-size: 20px;
  color: #fff;
}

.badge.blue {
  background-color: #0078d4;
}

.badge.green {
  border: 2px solid #fff;
  background-color: #13a10e;
}

.badge.red {
  top: -10px;
  right: -8px;
  background-color: #c42b1c;
}

.weather {
  gap: 14px;
  margin-left: auto;
}

.weather-icon {
  position: relative;
}

.weather-text,
.clock {
  display: flex;
  flex-direction: column;
  align-items: flex-start;
  font-size: 23px;
  line-height: 32px;
  color: #1a1a1a;
}

.muted {
  color: #5f5f5f;
}

.tray {
  display: flex;
  align-items: center;
  margin-left: 134px;
}

.tray-cloud,
.tray-mic {
  margin-left: 36px;
}

.tray-status {
  gap: 14px;
  margin-left: 31px;
}

.clock {
  align-items: flex-end;
  width: 142px;
  margin-right: 19px;
}
```
